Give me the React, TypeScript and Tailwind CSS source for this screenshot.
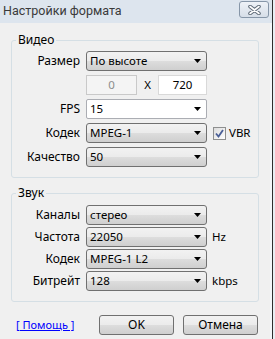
import React from 'react';

const font = "font-['Noto_Sans','Liberation_Sans',sans-serif]";

function Arrow() {
  return (
    <svg width="7" height="4" viewBox="0 0 7 4" className="shrink-0">
      <path d="M0 0H7L3.5 4Z" fill="#000" />
    </svg>
  );
}

function Combo({ value, editable }: { value: string; editable?: boolean }) {
  const skin = editable
    ? 'border-[#abadb3] bg-white rounded-[2px]'
    : 'border-[#707070] rounded-[3px] bg-[linear-gradient(#f2f2f2_0%,#ebebeb_50%,#dddddd_51%,#cfcfcf_100%)]';
  return (
    <div className={`flex h-5 w-[121px] items-center justify-between border pl-[3px] pr-[5px] ${skin}`}>
      <span className="text-[11.5px] leading-none text-black">{value}</span>
      <Arrow />
    </div>
  );
}

function Row({ label, children }: { label: string; children: React.ReactNode }) {
  return (
    <div className="flex h-5 items-center">
      <span className="w-[69px] pr-px text-right text-[12px] text-black">{label}</span>
      <div className="ml-[5px] flex items-center">{children}</div>
    </div>
  );
}

function Check() {
  return (
    <span className="flex h-[13px] w-[13px] items-center justify-center border border-[#8e8f8f] bg-[linear-gradient(135deg,#dcdcdc,#ffffff)]">
      <svg width="9" height="9" viewBox="0 0 9 9">
        <path d="M1 4.5L3.5 7.5L8 1" fill="none" stroke="#4a5f97" strokeWidth="1.8" />
      </svg>
    </span>
  );
}

function Button({ children }: { children: React.ReactNode }) {
  return (
    <button
      type="button"
      className="h-5 w-[75px] rounded-[3px] border border-[#707070] bg-[linear-gradient(#f2f2f2_0%,#ebebeb_50%,#dddddd_51%,#cfcfcf_100%)] text-[12px] leading-none text-black"
    >
      {children}
    </button>
  );
}

export default function App() {
  return (
    <div className={`flex h-[339px] w-[275px] bg-[#e9eef4] ${font}`}>
      <div className="flex w-[273px] flex-col border-r border-[#2e2e2e]">
        <div className="flex h-[23px] items-start justify-between bg-[#dde5ee] pl-[3px] pr-[3px]">
          <span className="pt-[2px] font-['Roboto',sans-serif] text-[12.5px] leading-[18px] text-[#3a3a3a]">
            Настройки формата
          </span>
          <span className="mt-[1px] flex h-[17px] w-[30px] items-center justify-center rounded-[3px] border border-[#8696a8] bg-[linear-gradient(#eef2f7,#d6dee8)]">
            <svg width="13" height="10" viewBox="0 0 13 10">
              <path d="M2 1.5L11 8.5M11 1.5L2 8.5" stroke="#5f6b78" strokeWidth="3.6" strokeLinecap="round" />
              <path d="M2 1.5L11 8.5M11 1.5L2 8.5" stroke="#ffffff" strokeWidth="1.6" strokeLinecap="round" />
            </svg>
          </span>
        </div>

        <div className="flex flex-1 flex-col border-r-2 border-[#f4f7fa] bg-[#f0f0f0] pl-[11px] pt-[9px]">
          <fieldset className="w-[248px] rounded-[3px] border border-[#d5dfe5] pb-[10px] pt-[3px]">
            <legend className="ml-[4px] px-[2px] text-[12px] leading-4 text-black">Видео</legend>
            <div className="flex flex-col gap-1">
              <Row label="Размер">
                <Combo value="По высоте" />
              </Row>
              <Row label="">
                <div className="flex w-[121px] items-center">
                  <span className="flex h-5 w-[51px] items-center justify-center border border-[#c9c9c9] bg-[#f4f4f4] text-[11.5px] text-[#8d8d8d]">
                    0
                  </span>
                  <span className="flex-1 text-center text-[11.5px] text-black">X</span>
                  <span className="flex h-5 w-[49px] items-center justify-center border border-[#d9d9d9] bg-white text-[11.5px] text-black">
                    720
                  </span>
                </div>
              </Row>
              <Row label="FPS">
                <Combo value="15" editable />
              </Row>
              <Row label="Кодек">
                <Combo value="MPEG-1" />
                <span className="ml-[6px] flex items-center gap-[3px] text-[11.5px] text-black">
                  <Check />
                  VBR
                </span>
              </Row>
              <Row label="Качество">
                <Combo value="50" />
              </Row>
            </div>
          </fieldset>

          <fieldset className="mt-[7px] w-[248px] rounded-[3px] border border-[#d5dfe5] pb-[10px] pt-[4px]">
            <legend className="ml-[4px] px-[2px] text-[12px] leading-4 text-black">Звук</legend>
            <div className="flex flex-col gap-[2px]">
              <Row label="Каналы">
                <Combo value="стерео" />
              </Row>
              <Row label="Частота">
                <Combo value="22050" />
                <span className="ml-[5px] text-[11.5px] text-black">Hz</span>
              </Row>
              <Row label="Кодек">
                <Combo value="MPEG-1 L2" />
              </Row>
              <Row label="Битрейт">
                <Combo value="128" />
                <span className="ml-[5px] text-[11.5px] text-black">kbps</span>
              </Row>
            </div>
          </fieldset>

          <div className="mt-[13px] flex w-[248px] items-center justify-between pr-px">
            <a className="pl-[5px] text-[11px] text-[#0000ff] underline">[ Помощь ]</a>
            <div className="flex gap-[9px]">
              <Button>OK</Button>
              <Button>Отмена</Button>
            </div>
          </div>
        </div>
      </div>
    </div>
  );
}
